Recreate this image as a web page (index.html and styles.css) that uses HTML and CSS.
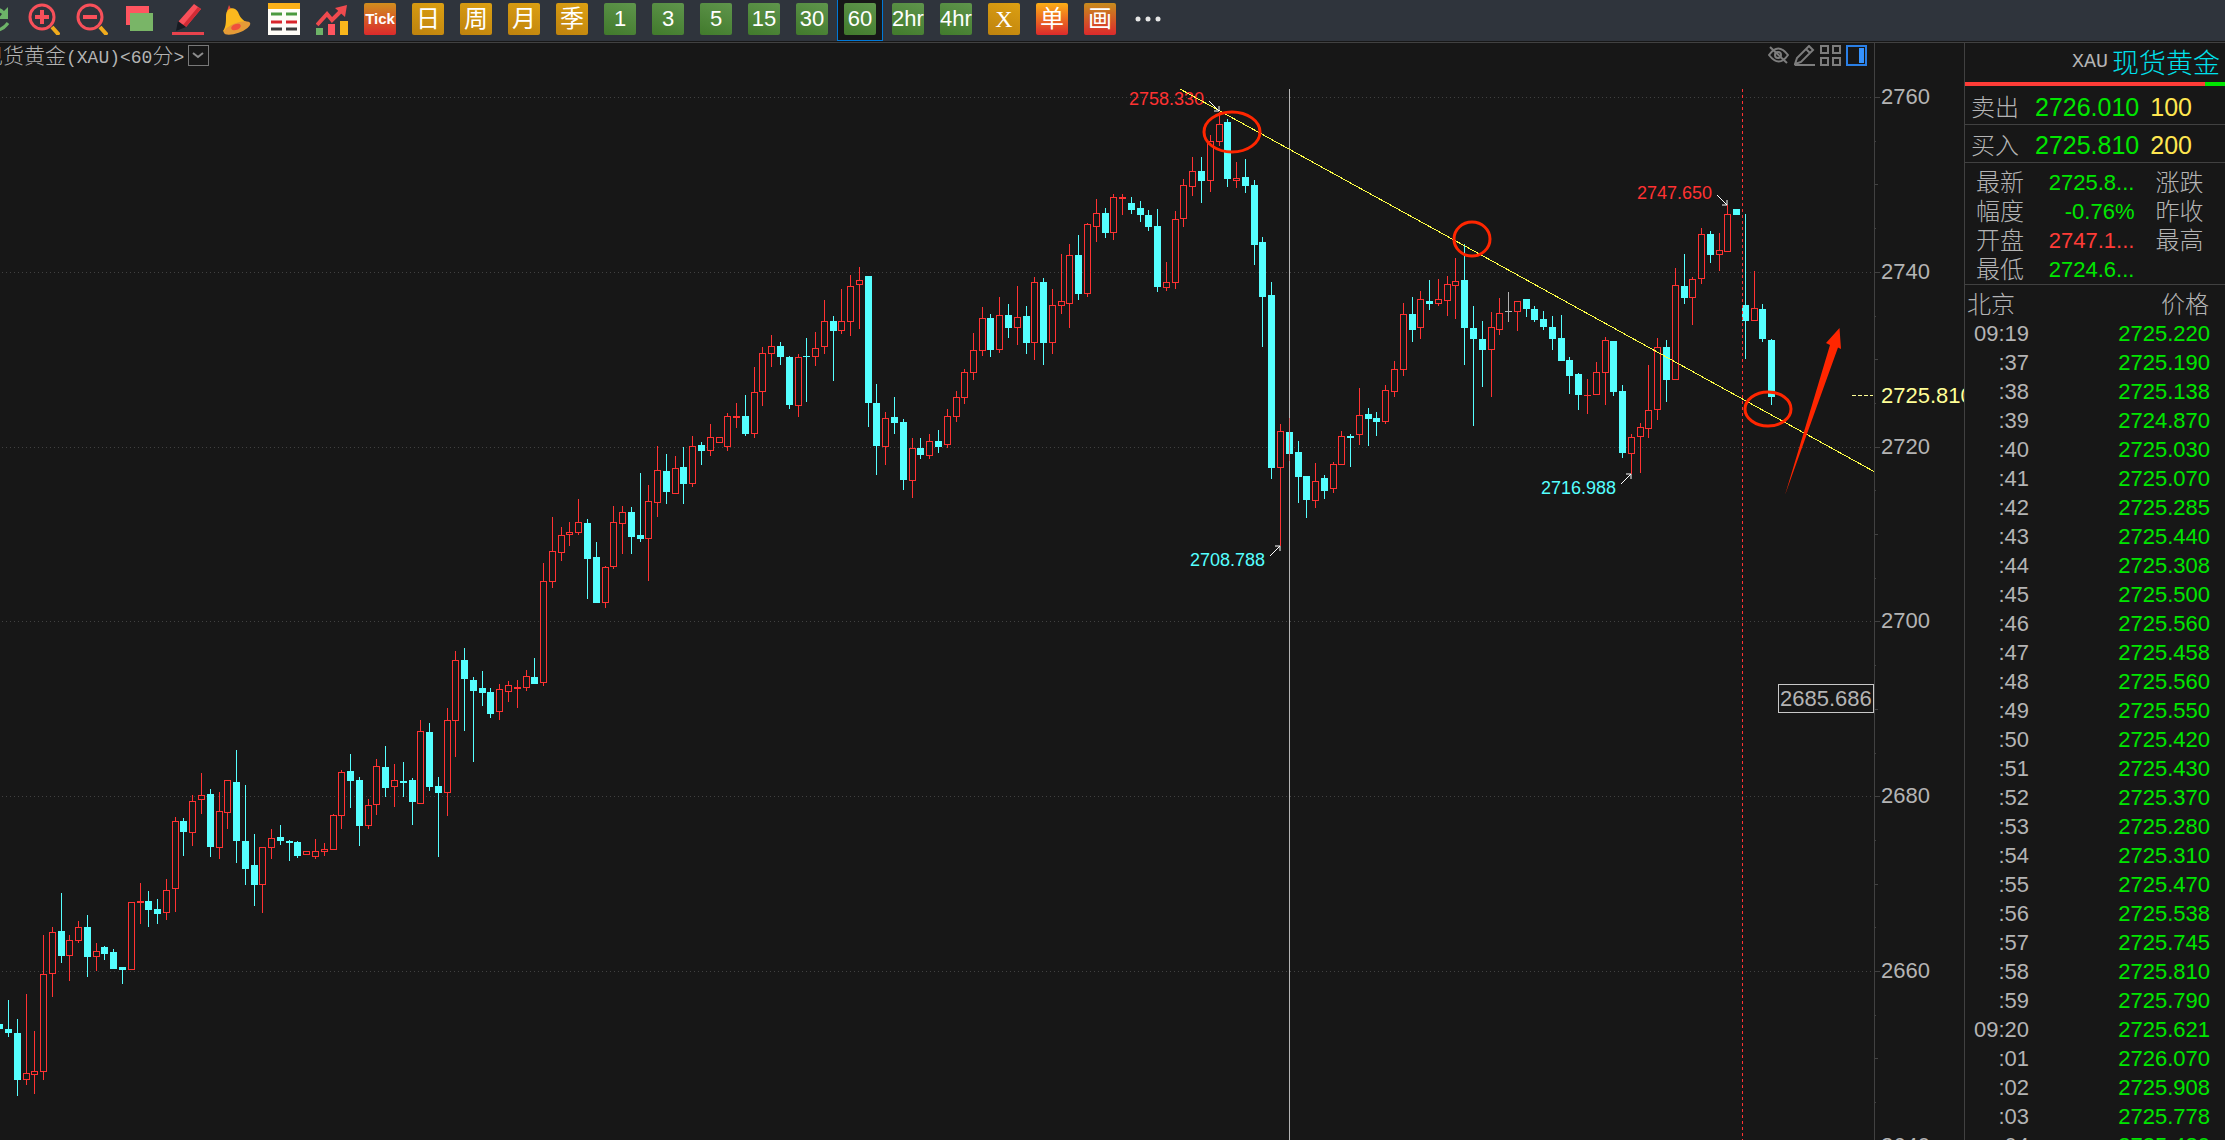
FILE: index.html
```html
<!DOCTYPE html>
<html lang="zh-CN">
<head>
  <meta charset="UTF-8">
  <meta name="viewport" content="width=device-width, initial-scale=1.0">
  <title>现货黄金 XAU</title>
  <link rel="stylesheet" href="styles.css">
</head>
<body>
  <div class="app">
    <nav class="toolbar">
      <button class="tool" aria-label="刷新">
        <svg width="32" height="32" viewBox="0 0 32 32"><path d="M4 14a12 12 0 0 1 20-6l4-4v12H18l4-5a8 8 0 0 0-13 4z" fill="#6db368"/><path d="M6 26q14 5 22-6" fill="none" stroke="#6db368" stroke-width="3"/></svg>
      </button>
      <button class="tool" aria-label="放大">
        <svg width="32" height="32" viewBox="0 0 32 32"><path d="M24 24l7 8" stroke="#f0ab1c" stroke-width="4"/><circle cx="14" cy="14" r="12" fill="none" stroke="#f8505a" stroke-width="3"/><path d="M14 7v14M7 14h14" stroke="#f8505a" stroke-width="4"/></svg>
      </button>
      <button class="tool" aria-label="缩小">
        <svg width="32" height="32" viewBox="0 0 32 32"><path d="M24 24l7 8" stroke="#f0ab1c" stroke-width="4"/><circle cx="14" cy="14" r="12" fill="none" stroke="#f8505a" stroke-width="3"/><path d="M7 14h14" stroke="#f8505a" stroke-width="4"/></svg>
      </button>
      <button class="tool" aria-label="叠加">
        <svg width="32" height="32" viewBox="0 0 32 32"><path d="M2 3h23v19H2z" fill="#ff5560"/><path d="M6 10h23v18H6z" fill="#79b567"/></svg>
      </button>
      <button class="tool" aria-label="画线">
        <svg width="32" height="32" viewBox="0 0 32 32"><path d="M22 1l7 5-15 18-8-5z" fill="#f8505a"/><path d="M26 4l3 2-15 18-3-2z" fill="#d22b35"/><path d="M6 18l8 6-10 4z" fill="#171b22"/><path d="M0 29h32v3H0z" fill="#e8434d"/></svg>
      </button>
      <button class="tool" aria-label="预警">
        <svg width="32" height="32" viewBox="0 0 32 32"><path d="M9 2l3 6h-5z" fill="#e0453d"/><path d="M6 13C6 4 15 3 18 9c2 5 4 8 10 11L6 31l-3-3c3-4 3-9 3-15z" fill="#fbb91e"/><ellipse cx="17" cy="25" rx="14" ry="5" transform="rotate(-20 17 25)" fill="#e59b37"/><ellipse cx="16" cy="24" rx="5" ry="3" transform="rotate(-20 16 24)" fill="#f0503c"/></svg>
      </button>
      <button class="tool" aria-label="报价">
        <svg width="32" height="32" viewBox="0 0 32 32"><path d="M0 0h32v32H0z" fill="#fffdf8"/><path d="M0 0h32v6H0z" fill="#fbb11a"/><path d="M3 11h11M18 11h11" stroke="#4d9a3e" stroke-width="3"/><path d="M3 19h11M18 19h11" stroke="#d8262b" stroke-width="3"/><path d="M3 26h11M18 26h11" stroke="#3c3c3c" stroke-width="3"/></svg>
      </button>
      <button class="tool" aria-label="指标">
        <svg width="32" height="32" viewBox="0 0 32 32"><path d="M1 22L11 11l5 6L26 7" fill="none" stroke="#ef4a4e" stroke-width="4"/><path d="M19 5l12-3-2 12z" fill="#ef4a4e"/><path d="M0 25h7v7H0z" fill="#6db368"/><path d="M12 21h7v11h-7z" fill="#ff5560"/><path d="M24 18h8v14h-8z" fill="#f9b61c"/></svg>
      </button>
      <button class="tool"><span class="tile tile-tick">Tick</span></button>
      <button class="tool"><span class="tile tile-gold">日</span></button>
      <button class="tool"><span class="tile tile-gold">周</span></button>
      <button class="tool"><span class="tile tile-gold">月</span></button>
      <button class="tool"><span class="tile tile-gold">季</span></button>
      <button class="tool"><span class="tile tile-green">1</span></button>
      <button class="tool"><span class="tile tile-green">3</span></button>
      <button class="tool"><span class="tile tile-green">5</span></button>
      <button class="tool"><span class="tile tile-green">15</span></button>
      <button class="tool"><span class="tile tile-green">30</span></button>
      <button class="tool active"><span class="tile tile-green">60</span></button>
      <button class="tool"><span class="tile tile-green">2hr</span></button>
      <button class="tool"><span class="tile tile-green">4hr</span></button>
      <button class="tool"><span class="tile tile-gold tile-x">X</span></button>
      <button class="tool"><span class="tile tile-orange">单</span></button>
      <button class="tool"><span class="tile tile-red">画</span></button>
      <button class="tool" aria-label="更多">
        <svg width="32" height="32" viewBox="0 0 32 32" fill="#e6e6e6"><circle cx="6" cy="16" r="2.5"/><circle cx="16" cy="16" r="2.5"/><circle cx="26" cy="16" r="2.5"/></svg>
      </button>
    </nav>

    <div class="main">
      <section class="chart">
        <svg id="plot" class="plot" viewBox="0 43 1964 1097" preserveAspectRatio="xMinYMin slice"></svg>
        <header class="chart-head">
          <h1 class="chart-title">现货黄金<span class="mono">(XAU)&lt;60</span>分<span class="mono">&gt;</span></h1>
          <button class="dropdown" aria-label="选择周期">
            <svg width="19" height="19" viewBox="0 0 19 19"><path d="M4 7l5 4 5-4" fill="none" stroke="#8c8c8c" stroke-width="2"/></svg>
          </button>
          <div class="chart-tools">
            <button class="mini" aria-label="隐藏">
              <svg width="21" height="21" viewBox="0 0 21 21" fill="none" stroke="#7d7d7d" stroke-width="2"><path d="M1 10q9-13 19 0q-9 13-19 0z"/><circle cx="10" cy="10" r="3"/><path d="M2 2l17 16"/></svg>
            </button>
            <button class="mini" aria-label="编辑">
              <svg width="21" height="21" viewBox="0 0 21 21" fill="none" stroke="#7d7d7d" stroke-width="2"><path d="M1 19l2-6L15 1l4 4L7 17zM12 4l4 4M1 20h20"/></svg>
            </button>
            <button class="mini" aria-label="布局">
              <svg width="21" height="21" viewBox="0 0 21 21" fill="none" stroke="#7d7d7d" stroke-width="2"><path d="M1 1h7v7H1zM13 1h7v7h-7zM1 13h7v7H1zM13 13h7v7h-7z"/></svg>
            </button>
            <button class="mini" aria-label="侧栏">
              <svg width="21" height="21" viewBox="0 0 21 21"><path d="M1 1h19v19H1z" fill="none" stroke="#2a7fe6" stroke-width="2"/><path d="M13 3h5v15h-5z" fill="#3593ff"/></svg>
            </button>
          </div>
        </header>
      </section>

      <aside class="side">
        <h2 class="symbol"><span class="code">XAU</span>现货黄金</h2>
        <div class="ratio"><span class="ratio-sell"></span><span class="ratio-buy"></span></div>
        <div class="quote"><span class="quote-name">卖出</span><span class="quote-price">2726.010</span><span class="quote-size">100</span></div>
        <div class="quote"><span class="quote-name">买入</span><span class="quote-price">2725.810</span><span class="quote-size">200</span></div>
        <table class="stats">
          <tr><th>最新</th><td>2725.8...</td><th>涨跌</th></tr>
          <tr><th>幅度</th><td>-0.76%</td><th>昨收</th></tr>
          <tr><th>开盘</th><td class="up">2747.1...</td><th>最高</th></tr>
          <tr><th>最低</th><td>2724.6...</td><th></th></tr>
        </table>
        <table class="ticks">
          <thead><tr><th>北京</th><th class="right">价格</th></tr></thead>
          <tbody id="ticks"></tbody>
        </table>
      </aside>
    </div>
  </div>
  <script src="script.js"></script>
</body>
</html>
```
FILE: styles.css
```css
* {
  box-sizing: border-box;
}

body {
  margin: 0;
  background: #171717;
  color: #b4b4b4;
  font-family: "Liberation Sans", "Noto Sans CJK SC", sans-serif;
  font-size: 22px;
}

button {
  margin: 0;
  padding: 0;
  border: 0;
  background: none;
  cursor: pointer;
}

svg {
  display: block;
}

.app {
  display: flex;
  flex-direction: column;
  height: 100vh;
  overflow: hidden;
}

/* toolbar */
.toolbar {
  display: flex;
  flex: none;
  gap: 2px;
  height: 41px;
  margin-left: -27px;
  background: #2f343c;
}

.tool {
  display: flex;
  flex: none;
  justify-content: center;
  width: 46px;
  height: 41px;
  padding-top: 3px;
}

.tool.active {
  background: #171717;
  border: 1px solid #0078d7;
  border-top: 0;
}

.tile {
  width: 32px;
  height: 32px;
  border-radius: 2px;
  color: #fff;
  font-family: "Liberation Sans", "Noto Sans CJK SC", sans-serif;
  font-size: 24px;
  line-height: 32px;
  text-align: center;
  white-space: nowrap;
}

.tile-green {
  background: linear-gradient(20deg, #417a2c, #5f954c);
  font-size: 22px;
}

.tile-gold {
  background: linear-gradient(20deg, #be820e, #dca012);
}

.tile-x {
  font-family: "Liberation Serif", serif;
}

.tile-tick {
  background: linear-gradient(#d08e1e, #dc2a2c);
  font-size: 15px;
  font-weight: bold;
}

.tile-orange {
  background: linear-gradient(#fcae16, #dc2a2c);
}

.tile-red {
  background: linear-gradient(#c88c1e, #dc2a2c);
}

/* chart */
.main {
  display: flex;
  flex: 1;
  min-height: 0;
  margin-top: 1px;
  border-top: 1px solid #414141;
}

.chart {
  position: relative;
  flex: 1;
  min-width: 0;
  overflow: hidden;
}

.plot {
  width: 100%;
  height: 100%;
}

.plot text {
  font-family: "Liberation Sans", sans-serif;
}

.chart-head {
  position: absolute;
  top: 0;
  left: 0;
  right: 97px;
  display: flex;
  align-items: center;
  gap: 4px;
  height: 25px;
}

.chart-title {
  margin: 0 0 0 -18px;
  font-family: "Noto Sans CJK SC", sans-serif;
  font-size: 21px;
  font-weight: 300;
  line-height: 22px;
  white-space: nowrap;
}

.mono {
  font-family: "Liberation Mono", monospace;
  font-size: 18px;
}

.dropdown {
  width: 21px;
  height: 21px;
  border: 1px solid #787878;
}

.chart-tools {
  display: flex;
  gap: 5px;
  margin-left: auto;
}

/* side panel */
.side {
  flex: none;
  width: 261px;
  border-left: 1px solid #414141;
  overflow: hidden;
  white-space: nowrap;
}

.symbol {
  display: flex;
  align-items: center;
  justify-content: flex-end;
  gap: 4px;
  height: 39px;
  margin: 0;
  padding: 0 5px 2px 0;
  color: #00e1eb;
  font-family: "Noto Sans CJK SC", sans-serif;
  font-size: 27px;
  font-weight: 300;
  line-height: 37px;
}

.code {
  color: #b4b4b4;
  font-family: "Liberation Mono", monospace;
  font-size: 20px;
}

.ratio {
  display: flex;
  height: 4px;
  margin-bottom: 1px;
}

.ratio-sell {
  flex: 12;
  background: #ff3c37;
}

.ratio-buy {
  flex: 1;
  background: #00e600;
}

.quote {
  display: flex;
  align-items: center;
  height: 38px;
  padding: 4px 33px 0 6px;
  border-bottom: 1px solid #414141;
}

.quote-name {
  width: 64px;
  font-weight: 300;
  font-size: 24px;
  line-height: 30px;
}

.quote-price {
  color: #00e600;
  font-size: 25px;
}

.quote-size {
  margin-left: auto;
  color: #ffe650;
  font-size: 25px;
}

.stats,
.ticks {
  width: 100%;
  border-collapse: collapse;
}

.stats {
  border-bottom: 1px solid #414141;
}

.stats tr:first-child > * {
  height: 34px;
  padding-top: 5px;
}

th {
  padding: 0;
  font-size: 24px;
  font-weight: 300;
  line-height: 29px;
  text-align: left;
}

td {
  padding: 0;
  color: #00e600;
  line-height: 29px;
  text-align: right;
}

.stats th {
  width: 70px;
  padding-left: 11px;
}

.stats td {
  width: 100px;
}

.stats th:last-child {
  width: 91px;
  padding-left: 21px;
}

.stats .up {
  color: #ff3c37;
}

.ticks th {
  height: 34px;
  padding: 5px 0 0 2px;
}

.ticks .right {
  padding-right: 16px;
  text-align: right;
}

.ticks td {
  height: 29px;
  padding-right: 15px;
}

.ticks .time {
  width: 64px;
  padding-right: 0;
  color: #b4b4b4;
}
```
FILE: script.js
```js
const BG = '#171717';
const RED = '#ff3232';
const CYAN = '#55ffff';
const GRAY = '#b4b4b4';

// x, high, body top, body bottom, low, direction (r up, c down, g flat)
const candles = `
-1 1024 1024 1029 1029 c|8 1000 1029 1033 1037 c|17 1019 1033 1080 1096 c|26 994 1073 1080 1085 r
34 1031 1071 1075 1094 r|43 935 974 1072 1080 r|52 927 932 974 997 r|61 893 931 956 963 c
69 935 940 956 981 r|78 921 927 941 943 r|87 915 927 957 977 c|96 943 951 957 971 r
104 946 947 954 960 c|113 949 952 969 969 c|122 967 967 970 984 c|131 902 902 970 970 r
140 883 901 903 924 r|148 891 901 910 927 c|157 899 909 914 924 c|166 879 890 913 920 r
175 817 821 889 912 r|183 818 821 832 856 c|192 795 801 833 846 r|201 773 795 800 814 r
210 789 794 847 857 c|219 792 811 848 859 r|227 780 780 813 829 r|236 750 782 841 863 c
245 785 841 869 885 c|254 834 865 885 906 c|262 847 847 885 913 r|271 829 838 848 859 r
280 825 837 841 845 c|289 840 841 843 861 c|297 841 842 856 858 c|306 851 851 855 855 r
315 839 851 857 859 r|324 843 849 852 856 r|333 814 815 850 850 r|341 770 772 816 829 r
350 754 771 781 808 c|359 777 780 826 846 c|368 799 805 826 829 r|376 759 766 805 815 r
385 746 767 788 797 c|394 764 780 787 807 r|403 762 781 783 797 c|412 778 780 802 825 c
420 720 731 804 804 r|429 723 732 787 791 c|438 777 786 793 857 c|447 708 720 793 816 r
455 651 660 721 757 r|464 648 660 679 731 c|473 677 680 691 762 c|482 671 688 693 706 c
490 688 692 714 718 c|499 684 689 712 720 r|508 681 685 692 702 r|517 680 687 689 708 r
526 670 676 688 691 r|534 658 677 684 684 c|543 563 581 683 686 r|552 517 551 582 588 r
561 527 535 553 561 r|569 522 532 535 546 r|578 499 522 533 535 r|587 519 523 559 599 c
596 542 557 603 603 c|605 566 567 603 608 r|613 506 522 567 569 r|622 506 512 524 554 r
631 507 512 537 554 c|640 473 535 539 542 c|648 485 501 539 581 r|657 446 470 503 517 r
666 454 471 492 504 c|675 456 468 494 494 r|683 447 467 484 504 c|692 436 446 484 487 r
701 442 445 451 465 c|710 424 437 451 456 r|719 437 437 443 443 r|727 413 416 447 451 r
736 403 416 418 428 r|745 395 416 434 436 c|754 367 392 434 438 r|762 347 353 392 406 r
771 335 346 354 367 r|780 342 346 357 365 c|789 356 357 405 409 c|798 354 357 406 417 r
806 338 356 357 402 c|815 332 348 357 366 r|824 300 321 347 354 r|833 316 321 331 381 c
841 289 321 331 334 r|850 275 286 322 336 r|859 267 280 285 329 r|868 276 276 403 427 c
876 384 403 446 475 c|885 412 418 447 465 r|894 397 417 423 434 c|903 419 422 480 490 c
912 438 448 481 498 r|920 438 448 455 459 c|929 434 441 456 459 r|938 430 441 447 453 c
947 409 416 445 448 r|956 391 397 417 422 r|964 369 372 398 404 r|973 333 350 373 380 r
982 307 318 351 356 r|990 314 318 350 357 c|999 297 315 350 353 r|1008 304 315 328 338 c
1017 286 317 328 345 r|1026 306 316 343 354 c|1034 277 282 343 360 r|1043 278 282 343 365 c
1052 289 305 343 354 r|1061 254 301 306 314 r|1069 244 255 304 328 r|1078 235 255 294 300 c
1087 223 224 294 297 r|1096 199 213 227 242 r|1105 208 213 233 238 c|1113 194 197 233 240 r
1122 194 197 199 215 r|1131 197 203 210 214 c|1140 201 208 215 222 c|1148 210 215 227 231 c
1157 209 226 287 292 c|1166 262 282 288 291 r|1175 211 219 283 289 r|1183 179 185 219 227 r
1192 157 171 187 196 r|1201 157 171 181 203 c|1210 135 141 181 192 r|1219 112 124 142 146 r
1227 119 122 179 187 c|1236 162 178 181 188 r|1245 159 177 186 193 c|1254 180 185 245 265 c
1262 237 242 297 347 c|1271 282 295 468 479 c|1280 424 431 468 546 r|1289 418 432 454 461 c
1298 441 452 477 503 c|1306 476 476 500 518 c|1315 463 481 501 508 r|1324 475 478 491 499 c
1333 462 464 489 493 r|1341 431 436 465 465 r|1350 434 436 438 467 c|1359 388 415 435 445 r
1368 408 414 419 446 c|1376 412 418 422 436 c|1385 385 390 422 424 r|1394 361 369 392 397 r
1403 303 314 370 376 r|1412 297 314 330 342 c|1420 291 299 328 339 r|1429 280 301 304 310 c
1438 279 299 304 306 r|1447 276 284 301 316 r|1455 258 281 286 319 r|1464 244 280 328 365 c
1473 306 328 339 426 c|1482 321 339 350 387 c|1491 312 327 350 397 r|1499 298 313 330 335 r
1508 292 311 312 322 g|1517 301 301 312 331 r|1526 299 299 309 317 c|1534 306 309 320 322 c
1543 311 319 327 330 c|1552 316 327 339 350 c|1561 315 338 361 361 c|1569 357 360 376 394 c
1578 373 374 395 410 c|1587 379 395 396 414 r|1596 362 372 395 395 r|1605 337 340 373 405 r
1613 341 341 392 396 c|1622 385 391 453 458 c|1631 434 437 454 474 r|1640 423 427 437 473 r
1648 365 410 429 438 r|1657 338 347 410 420 r|1666 340 347 380 402 c|1675 268 285 380 380 r
1684 254 286 298 304 c|1692 277 279 298 325 r|1701 228 234 279 284 r|1710 231 234 255 263 c
1719 233 250 255 271 r|1727 205 214 252 252 r|1736 209 209 215 215 c|1745 214 305 321 359 c
1754 271 308 321 321 r|1762 304 309 339 342 c|1771 339 340 397 405 c
`.trim().split(/[|\n]/).map(row => row.split(' '));

const ticks = `09:19 2725.220|:37 2725.190|:38 2725.138|:39 2724.870|:40 2725.030|:41 2725.070
:42 2725.285|:43 2725.440|:44 2725.308|:45 2725.500|:46 2725.560|:47 2725.458
:48 2725.560|:49 2725.550|:50 2725.420|:51 2725.430|:52 2725.370|:53 2725.280
:54 2725.310|:55 2725.470|:56 2725.538|:57 2725.745|:58 2725.810|:59 2725.790
09:20 2725.621|:01 2726.070|:02 2725.908|:03 2725.778|:04 2725.480`.split(/[|\n]/);

const rect = (x, y, w, h, fill) => `<rect x="${x}" y="${y}" width="${w}" height="${h}" fill="${fill}"/>`;
const text = (x, y, size, fill, value) => `<text x="${x}" y="${y}" font-size="${size}" fill="${fill}">${value}</text>`;

function drawGrid() {
  let out = '';
  for (let i = 0; i <= 24; i++) {
    const y = Math.round(97 + i * 43.7);
    const tick = i % 4 === 0 ? 5 : i % 2 === 0 ? 3 : 1;
    out += rect(1875, y, tick, 1, '#414141');
    if (i % 4 === 0) {
      out += `<path d="M2 ${y + 0.5}H1874" stroke="#414141" stroke-dasharray="1 3"/>`;
      out += text(1881, y + 7, 22, GRAY, 2760 - i * 5);
    }
  }
  return out + rect(1874, 43, 1, 1097, '#414141');
}

function drawCandle([px, ph, pt, pb, pl, dir]) {
  const [x, high, top, bottom, low] = [px, ph, pt, pb, pl].map(Number);
  const color = { r: RED, c: CYAN, g: GRAY }[dir];
  let out = rect(x, high, 1, low - high, color) + rect(x - 3, top, 7, bottom - top, color);
  if (dir === 'r' && bottom - top > 2) {
    out += rect(x - 2, top + 1, 5, bottom - top - 2, BG);
  }
  return out;
}

function drawPlot() {
  let out = '<g shape-rendering="crispEdges">' + drawGrid();
  out += candles.map(drawCandle).join('');
  out += rect(1289, 89, 1, 1051, '#b4b4b4') + rect(1289, 418, 1, 43, '#d06a6a');
  out += `<path d="M1742.5 89V1140" stroke="${RED}" stroke-dasharray="3 3"/>`;
  out += '<path d="M1852 395.5H1873" stroke="#ffff96" stroke-dasharray="4 2"/>';
  out += '</g>';

  out += text(1129, 105, 18, RED, '2758.330') + text(1637, 199, 18, RED, '2747.650');
  out += text(1190, 566, 18, CYAN, '2708.788') + text(1541, 494, 18, CYAN, '2716.988');
  out += '<path d="M1180 89L1874 471.5" stroke="#ffff46" shape-rendering="crispEdges"/>';

  // pointers from the labels to their candles
  out += `<path d="M1209 101l10 10m-5 0h5v-5M1717 195l10 10m-5 0h5v-5
    M1270 556l10-10m-5 0h5v5M1621 484l10-10m-5 0h5v5" fill="none" stroke="#fff"/>`;

  out += text(1881, 403, 22, '#ffff96', '2725.810');
  out += `<rect x="1778.5" y="684.5" width="95" height="28" fill="${BG}" stroke="#c8c8c8"/>`;
  out += text(1780, 706, 22, GRAY, '2685.686');

  // hand-drawn marks
  out += `<g fill="none" stroke="#ff2600" stroke-width="3">
    <ellipse cx="1232" cy="132" rx="28" ry="20"/>
    <ellipse cx="1472" cy="239" rx="18" ry="17"/>
    <ellipse cx="1768" cy="409" rx="23" ry="17"/>
  </g>
  <path d="M1785 495L1830 345L1826 343L1839.5 328L1841 349L1838 347.5z" fill="#ff2600"/>`;

  document.getElementById('plot').innerHTML = out;
}

function drawTicks() {
  document.getElementById('ticks').innerHTML = ticks.map(row => {
    const [time, price] = row.split(' ');
    return `<tr><td class="time">${time}</td><td>${price}</td></tr>`;
  }).join('');
}

drawPlot();
drawTicks();
```
